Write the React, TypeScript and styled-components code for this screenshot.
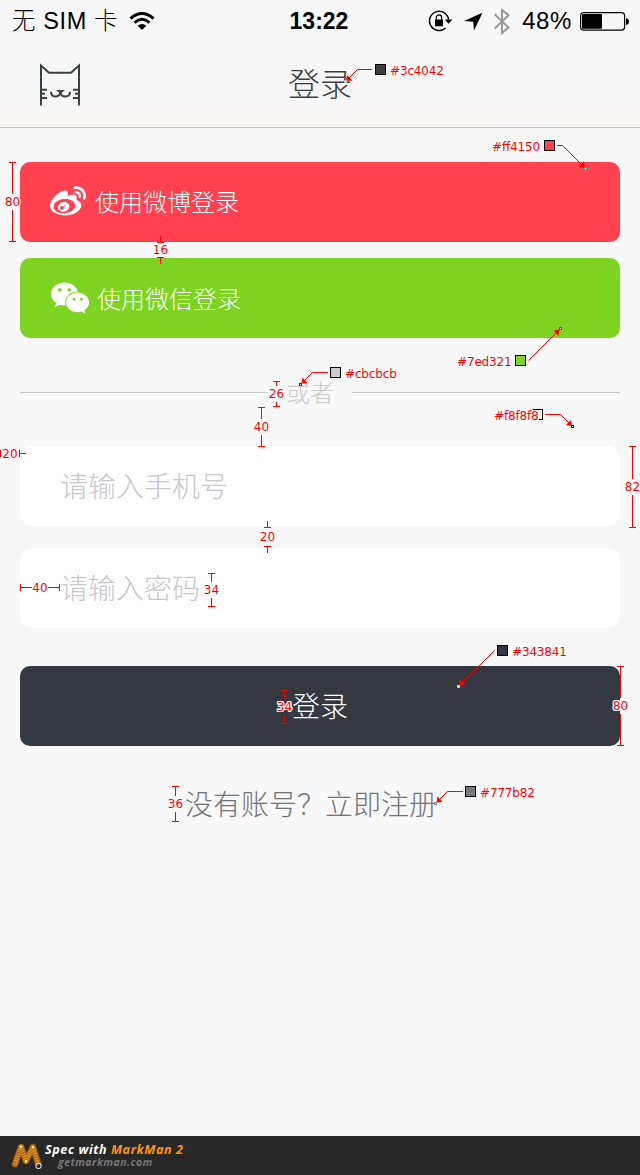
import React from 'react';
import styled, { createGlobalStyle } from 'styled-components';
import { FaWeibo, FaWeixin } from 'react-icons/fa';

const GlobalStyle = createGlobalStyle`
  * { box-sizing: border-box; }
  body { margin: 0; background: #f8f8f8; }
`;

const Screen = styled.div`
  position: relative;
  display: flex;
  flex-direction: column;
  width: 640px;
  height: 1175px;
  overflow: hidden;
  background: #f8f8f8;
  font-family: 'Noto Sans CJK SC', sans-serif;
  font-weight: 300;
`;

const Header = styled.header`
  height: 128px;
  background: linear-gradient(#f7f7f7 60%, #f8f5f5);
  border-bottom: 1px solid #c9c5c5;
`;

const StatusBar = styled.div`
  display: grid;
  grid-template-columns: 1fr auto 1fr;
  align-items: center;
  height: 40px;
  padding: 0 11px 0 12px;
  color: #000;
  font-family: 'Liberation Sans', 'Noto Sans CJK SC', sans-serif;
  font-size: 24px;
  line-height: 40px;
  font-weight: 300;
`;

const StatusGroup = styled.div<{ $end?: boolean }>`
  display: flex;
  align-items: center;
  justify-content: ${p => (p.$end ? 'flex-end' : 'flex-start')};
  height: 40px;
  white-space: nowrap;
`;

const Carrier = styled.span`
  padding-top: 1px;
  font-size: 23.5px;
  letter-spacing: 0.6px;
  margin-right: 11px;
`;

const Time = styled.span`
  padding: 1px 3px 0 0;
  font-size: 23px;
  font-weight: 700;
`;

const Percent = styled.span`
  padding-top: 1px;
  margin: 0 8px 0 11px;
  letter-spacing: 0.6px;
`;

const NavBar = styled.div`
  display: grid;
  grid-template-columns: 42px 1fr 42px;
  align-items: center;
  height: 87px;
  padding: 0 39px;
`;

const Title = styled.h1`
  margin: 0;
  padding: 0 0 4px;
  color: #3c4042;
  font-size: 32px;
  line-height: 40px;
  font-weight: 300;
  text-align: center;
`;

const Content = styled.main`
  display: flex;
  flex-direction: column;
  flex: 1;
  padding: 34px 20px 0;
`;

const SocialButton = styled.button<{ $color: string }>`
  display: flex;
  align-items: center;
  height: 80px;
  margin: 0 0 16px;
  padding: 0 30px;
  border: 0;
  border-radius: 10px;
  background: ${p => p.$color};
  color: #fff;
  font: inherit;
  font-size: 24px;
`;

const SocialLabel = styled.span<{ $gap: number; $lift: number }>`
  margin-left: ${p => p.$gap}px;
  padding-bottom: ${p => p.$lift}px;
`;

const Divider = styled.div`
  display: flex;
  align-items: center;
  height: 36px;
  margin-top: 20px;
  color: #cbcbcb;
  font-size: 24px;
  line-height: 36px;
`;

const Rule = styled.i<{ $width: number }>`
  width: ${p => p.$width}px;
  height: 1px;
  background: #c7c7c7;
`;

const DividerText = styled.span`
  margin: 0 18px;
`;

const Field = styled.input`
  height: 80px;
  margin: 0 0 22px;
  padding: 0 40px 2px;
  border: 0;
  border-radius: 12px;
  outline: 0;
  background: #fff;
  font: inherit;
  font-size: 28px;
  &::placeholder { color: #c7c7cd; opacity: 1; }
`;

const Fields = styled.div`
  display: flex;
  flex-direction: column;
  margin-top: 36px;
`;

const LoginButton = styled.button`
  height: 80px;
  margin-top: 16px;
  padding: 0 0 2px;
  border: 0;
  border-radius: 10px;
  background: #343841;
  color: #fff;
  font: inherit;
  font-size: 28px;
`;

const SignUp = styled.p`
  margin: 36px 0 0;
  padding-right: 18px;
  color: #6f737a;
  font-size: 28px;
  line-height: 42px;
  text-align: center;
`;

const Footer = styled.footer`
  display: flex;
  align-items: center;
  gap: 2px;
  height: 39px;
  padding-left: 11px;
  background: #272727;
  font-family: 'Open Sans', sans-serif;
  font-style: italic;
  font-weight: 700;
`;

const Brand = styled.div`
  color: #fff;
  font-size: 12.6px;
  letter-spacing: 0.57px;
  line-height: 14px;
  white-space: nowrap;
`;

const BrandName = styled.span`
  color: #ff9410;
`;

const Site = styled.div`
  padding-left: 13px;
  color: #777;
  font-size: 10.5px;
  letter-spacing: 0.5px;
  line-height: 11px;
`;

/* Spec annotations laid over the screen */

const Mark = styled.div<{ $x: number; $y: number; $size: number; $across?: boolean }>`
  position: absolute;
  left: ${p => p.$x}px;
  top: ${p => p.$y}px;
  display: flex;
  flex-direction: ${p => (p.$across ? 'row' : 'column')};
  align-items: center;
  justify-content: space-between;
  width: ${p => (p.$across ? p.$size : 7)}px;
  height: ${p => (p.$across ? 7 : p.$size)}px;
`;

const Tick = styled.i<{ $across?: boolean }>`
  flex: none;
  width: ${p => (p.$across ? 1 : 7)}px;
  height: ${p => (p.$across ? 7 : 1)}px;
  background: #f00;
`;

const Stem = styled.i<{ $across?: boolean; $length?: number }>`
  flex: ${p => (p.$length ? `0 0 ${p.$length}px` : '1')};
  ${p => (p.$across ? 'height' : 'width')}: 1px;
  background: #f00;
`;

const Label = styled.span`
  flex: none;
  color: #f00;
  font: 12px/14px 'DejaVu Sans', sans-serif;
  white-space: nowrap;
  text-shadow: 1px 0 #fff, -1px 0 #fff, 0 1px #fff, 0 -1px #fff, 1px 1px #fff, -1px -1px #fff, 1px -1px #fff, -1px 1px #fff;
`;

const Value = styled(Label)<{ $across?: boolean; $fill?: boolean }>`
  display: flex;
  flex: ${p => (p.$fill ? '1 1 0' : 'none')};
  min-height: 0;
  align-items: center;
  justify-content: center;
  width: ${p => (p.$across ? 16 : 17)}px;
  height: 16px;
`;

type MeasureProps = { x: number; y: number; size: number; value: number; across?: boolean; outside?: boolean };

function Measure({ x, y, size, value, across, outside }: MeasureProps) {
  return (
    <Mark $x={x} $y={y} $size={size} $across={across}>
      {outside ? <Stem $across={across} $length={6} /> : null}
      <Tick $across={across} />
      {outside ? null : <Stem $across={across} />}
      <Value $across={across} $fill={outside}>{value}</Value>
      {outside ? null : <Stem $across={across} />}
      <Tick $across={across} />
      {outside ? <Stem $across={across} $length={6} /> : null}
    </Mark>
  );
}

const Callout = styled.div<{ $x: number; $y: number; $flip?: boolean; $gap: number }>`
  position: absolute;
  left: ${p => p.$x}px;
  top: ${p => p.$y}px;
  display: flex;
  flex-direction: ${p => (p.$flip ? 'row-reverse' : 'row')};
  align-items: center;
  gap: ${p => (p.$flip ? 5 : 4)}px;
  height: 11px;
  ${Label} {
    position: relative;
    width: ${p => (p.$flip ? p.$gap + 'px' : 'auto')};
    letter-spacing: -0.15px;
    padding-top: 2px;
  }
`;

const Swatch = styled.i<{ $color: string; $overlap?: boolean }>`
  flex: none;
  width: 11px;
  height: 11px;
  margin-left: ${p => (p.$overlap ? -14 : 0)}px;
  border: 1px solid #000;
  background: ${p => p.$color};
`;

const Leaders = styled.svg`
  position: absolute;
  left: 0;
  top: 0;
  pointer-events: none;
`;

const leaders = [
  { path: 'M372 69.5H357.5L348 79', head: '346,81 347,75 352.500,80.500', dot: [344, 80], color: '#a9c0b8' },
  { path: 'M557 145.5H562.500L583 166', head: '585,168 578.500,167 584,161.500', dot: [584, 167], color: '#00bfaf' },
  { path: 'M528.500 360.500L557 332', head: '559.500,329.500 553.500,330.500 558.500,336', dot: [559, 327], color: '#812cde' },
  { path: 'M328 372.500H312.500L304 381', head: '301.500,383.500 302.500,377.500 307.500,383', dot: [299, 383], color: '#343434' },
  { path: 'M545 414.500H560.500L570 424', head: '572,426 566,425 571,420', dot: [571, 425], color: '#070707' },
  { path: 'M494.500 650.500L461 684', head: '459,686 460,679.500 465.500,685', dot: [457, 685], color: '#cbc7be' },
  { path: 'M463 791.500H447.500L439 800', head: '436.500,802.500 437.500,796.500 442.500,802', dot: [434, 802], color: '#88847d' },
] as const;

const measures: MeasureProps[] = [
  { x: 9, y: 162, size: 80, value: 80 },
  { x: 157, y: 236, size: 28, value: 16, outside: true },
  { x: 273, y: 381, size: 26, value: 26 },
  { x: 258, y: 407, size: 40, value: 40 },
  { x: -6, y: 450, size: 32, value: 20, across: true, outside: true },
  { x: 264, y: 521, size: 32, value: 20, outside: true },
  { x: 20, y: 584, size: 40, value: 40, across: true },
  { x: 208, y: 573, size: 34, value: 34 },
  { x: 629, y: 446, size: 82, value: 82 },
  { x: 281, y: 690, size: 34, value: 34 },
  { x: 617, y: 666, size: 80, value: 80 },
  { x: 172, y: 786, size: 36, value: 36 },
];

const swatches = [
  { x: 375, y: 64, color: '#3c4042' },
  { x: 492, y: 140, color: '#ff4150', flip: true, gap: 47 },
  { x: 457, y: 355, color: '#7ed321', flip: true, gap: 53 },
  { x: 330, y: 367, color: '#cbcbcb' },
  { x: 494, y: 409, color: '#f8f8f8', flip: true, gap: 47, overlap: true },
  { x: 497, y: 645, color: '#343841' },
  { x: 465, y: 786, color: '#777b82' },
];

function Wifi() {
  return (
    <svg width="26" height="20" viewBox="0 0 26 20" fill="none" stroke="#000">
      <path d="M1.500 7.500Q13 -2.500 24.500 7.500" strokeWidth="3" />
      <path d="M5.500 11.600Q13 5 20.500 11.600" strokeWidth="2.800" />
      <path d="M8.700 14.800Q13 11.200 17.300 14.800L13 19Z" fill="#000" stroke="none" />
    </svg>
  );
}

function StatusIcons() {
  return (
    <svg width="83" height="30" viewBox="428 5.500 83 30" fill="none">
      <path d="M445.600 27.500A9.600 9.600 0 1 1 448.600 19" stroke="#000" strokeWidth="1.500" />
      <path d="M444.800 19H452.400L448.500 23.200Z" fill="#000" />
      <path d="M435 19H443V25.800H435Z" fill="#000" />
      <path d="M436.400 19.200V17A2.600 2.600 0 0 1 441.600 17V19.200" stroke="#000" strokeWidth="1.300" />
      <path d="M464 20.500L482.500 12.300L474 30L473.200 21.200Z" fill="#000" />
      <path d="M494.700 13.700L508.500 27L502 32.500V9.500L508.500 14.700L494.700 28" stroke="#999" strokeWidth="2" />
    </svg>
  );
}

function Battery() {
  return (
    <svg width="49" height="20" viewBox="0 0 49 20" fill="none">
      <rect x="0.600" y="1.600" width="44" height="17.500" rx="3" stroke="#000" strokeWidth="1.200" />
      <rect x="2" y="3" width="20" height="14.800" rx="1" fill="#000" />
      <path d="M46 7Q49 7.500 49 10.500T46 14Z" fill="#000" />
    </svg>
  );
}

function Cat() {
  return (
    <svg width="42" height="44" viewBox="39 62 42 44" fill="none" stroke="#3c4042" strokeWidth="2">
      <path d="M41 105.500V65.500L49 72.700H71L79 65.500V105.500" />
      <path d="M41 89.800H47M41 93.800H45M41 98H47M79 89.800H73M79 93.800H75M79 98H73" />
      <path d="M51 91.800C51 98 59 98 60.300 92.500C61.500 98 70 98 70 91.800" />
      <path d="M56 90H65L60.500 94Z" fill="#3c4042" stroke="none" />
    </svg>
  );
}

function MarkManLogo() {
  return (
    <svg width="32" height="30" viewBox="0 0 32 30" fill="none" strokeLinecap="round" strokeLinejoin="round">
      <path d="M4 23L10 6L15 20L22 6L27.500 24" stroke="#6b3a06" strokeWidth="7" />
      <path d="M4 23L10 6L15 20L22 6L27.500 24" stroke="#b66c14" strokeWidth="5.800" />
      <path d="M4 23L10 6L15 20L22 6L27.500 24" stroke="#dc9a3e" strokeWidth="4" strokeDasharray="1 1.500" strokeLinecap="butt" />
      <circle cx="10" cy="6" r="1.200" fill="#ffe49a" />
      <circle cx="22" cy="6" r="1.200" fill="#ffe49a" />
      <circle cx="15" cy="20" r="1.200" fill="#ffe49a" />
      <circle cx="27.500" cy="25" r="3" fill="#eee" />
      <circle cx="27.500" cy="25" r="2.100" fill="#111" />
      <circle cx="27" cy="24.500" r="0.600" fill="#fff" />
    </svg>
  );
}

export default function App() {
  return (
    <Screen lang="zh-CN">
      <GlobalStyle />
      <Header>
        <StatusBar>
          <StatusGroup><Carrier>无 SIM 卡</Carrier><Wifi /></StatusGroup>
          <Time>13:22</Time>
          <StatusGroup $end><StatusIcons /><Percent>48%</Percent><Battery /></StatusGroup>
        </StatusBar>
        <NavBar><Cat /><Title>登录</Title></NavBar>
      </Header>
      <Content>
        <SocialButton $color="#ff4150"><FaWeibo size={36} /><SocialLabel $gap={9} $lift={4}>使用微博登录</SocialLabel></SocialButton>
        <SocialButton $color="#7ed321"><FaWeixin size={40} /><SocialLabel $gap={7} $lift={2}>使用微信登录</SocialLabel></SocialButton>
        <Divider><Rule $width={248} /><DividerText>或者</DividerText><Rule $width={268} /></Divider>
        <Fields>
          <Field placeholder="请输入手机号" />
          <Field placeholder="请输入密码" />
        </Fields>
        <LoginButton>登录</LoginButton>
        <SignUp>没有账号？立即注册</SignUp>
      </Content>
      <Footer>
        <MarkManLogo />
        <div>
          <Brand>Spec with <BrandName>MarkMan 2</BrandName></Brand>
          <Site>getmarkman.com</Site>
        </div>
      </Footer>

      {measures.map((m, i) => <Measure key={i} {...m} />)}
      {swatches.map(s => (
        <Callout key={s.color} $x={s.x} $y={s.y} $flip={s.flip} $gap={s.gap ?? 0}>
          <Swatch $color={s.color} $overlap={s.overlap} />
          <Label>{s.color}</Label>
        </Callout>
      ))}
      <Leaders width="640" height="1175">
        {leaders.map(l => (
          <g key={l.path}>
            <path d={l.path} fill="none" stroke="#f00" />
            <polygon points={l.head} fill="#f00" />
            <rect x={l.dot[0] + 0.5} y={l.dot[1] + 0.5} width="2" height="2" fill="#f8f8f8" stroke={l.color} />
          </g>
        ))}
      </Leaders>
    </Screen>
  );
}
